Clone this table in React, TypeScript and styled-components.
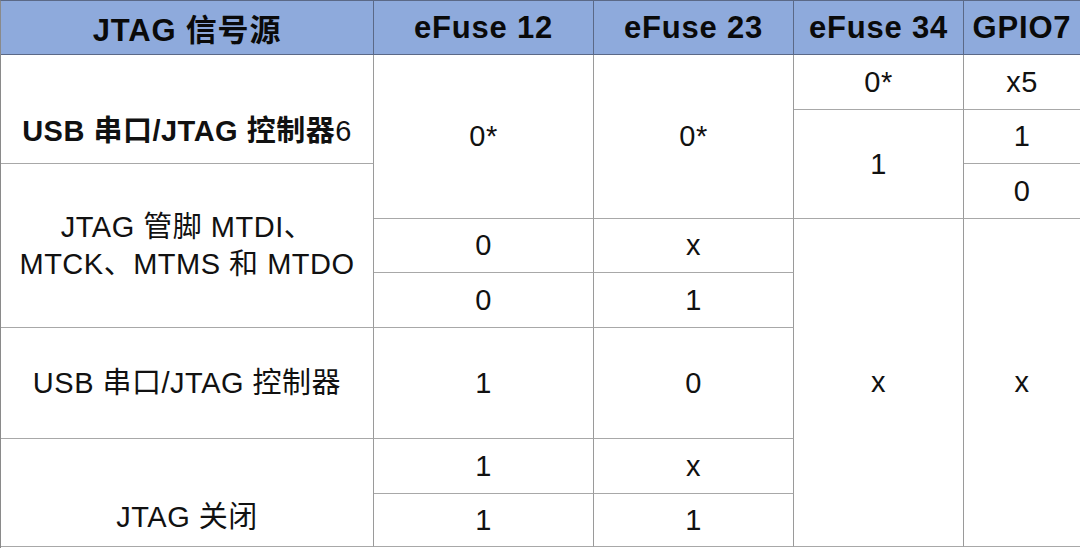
import styled, { createGlobalStyle } from "styled-components";

const GlobalStyle = createGlobalStyle`
    html, body {
        margin: 0;
        padding: 0;
        background: #ffffff;
    }
    body {
        font-family: "Liberation Sans", "Noto Sans CJK SC", sans-serif;
        color: #111111;
    }
`;

type Cell = {
    text: React.ReactNode;
    col: string;
    row: string;
    bold?: boolean;
    shift?: number;
};

const cells: Cell[] = [
    { text: "USB 串口/JTAG 控制器", col: "1", row: "2 / 4", bold: true, shift: 44 },
    { text: <>JTAG 管脚 MTDI、<br />MTCK、MTMS 和 MTDO</>, col: "1", row: "4 / 7" },
    { text: "USB 串口/JTAG 控制器", col: "1", row: "7 / 8" },
    { text: "JTAG 关闭", col: "1", row: "8 / 10", shift: 50 },

    { text: "0*", col: "2", row: "2 / 5" },
    { text: "0", col: "2", row: "5 / 6" },
    { text: "0", col: "2", row: "6 / 7" },
    { text: "1", col: "2", row: "7 / 8" },
    { text: "1", col: "2", row: "8 / 9" },
    { text: "1", col: "2", row: "9 / 10" },

    { text: "0*", col: "3", row: "2 / 5" },
    { text: "x", col: "3", row: "5 / 6" },
    { text: "1", col: "3", row: "6 / 7" },
    { text: "0", col: "3", row: "7 / 8" },
    { text: "x", col: "3", row: "8 / 9" },
    { text: "1", col: "3", row: "9 / 10" },

    { text: "0*", col: "4", row: "2 / 3" },
    { text: "1", col: "4", row: "3 / 5" },
    { text: "x", col: "4", row: "5 / 10" },

    { text: "x5", col: "5", row: "2 / 3" },
    { text: "1", col: "5", row: "3 / 4" },
    { text: "0", col: "5", row: "4 / 5" },
    { text: "x", col: "5", row: "5 / 10" },
];

const headers = ["JTAG 信号源", "eFuse 12", "eFuse 23", "eFuse 34", "GPIO7"];

const App = () => {
    return (
        <>
            <GlobalStyle />
            <Table>
                {headers.map((h) => (
                    <HeadCell key={h}>{h}</HeadCell>
                ))}
                {cells.map((c, i) => (
                    <BodyCell
                        key={i}
                        $col={c.col}
                        $row={c.row}
                        $bold={c.bold}
                        $shift={c.shift ?? 0}
                    >
                        <span>
                            {c.text}
                            {c.bold && <Note>6</Note>}
                        </span>
                    </BodyCell>
                ))}
            </Table>
        </>
    );
};

const Table = styled.div`
    display: grid;
    grid-template-columns: 373px 220px 200px 170px 117px;
    grid-template-rows: 54px 55px 54px 55px 54px 55px 111px 55px 53px;
    width: 1080px;
    height: 548px;
    box-sizing: border-box;
    border-top: 1px solid #5b6987;
    border-left: 1px solid #8a8a8a;
`;

const HeadCell = styled.div`
    display: flex;
    align-items: center;
    justify-content: center;
    box-sizing: border-box;
    background: #8eaadc;
    border-right: 1px solid #5b6987;
    border-bottom: 1px solid #5b6987;
    font-size: 31px;
    font-weight: 700;
    color: #0a0a0a;
    letter-spacing: 0.8px;
    white-space: nowrap;
`;

const BodyCell = styled.div<{
    $col: string;
    $row: string;
    $bold?: boolean;
    $shift: number;
}>`
    grid-column: ${(p) => p.$col};
    grid-row: ${(p) => p.$row};
    display: flex;
    align-items: center;
    justify-content: center;
    box-sizing: border-box;
    padding-top: ${(p) => p.$shift}px;
    border-right: 1px solid #9a9a9a;
    border-bottom: 1px solid #a8a8a8;
    font-size: 29px;
    font-weight: ${(p) => (p.$bold ? 700 : 400)};
    line-height: 37px;
    letter-spacing: 0.5px;
    text-align: center;
    color: #111111;
    white-space: nowrap;
`;

const Note = styled.span`
    font-weight: 400;
`;

export default App;
